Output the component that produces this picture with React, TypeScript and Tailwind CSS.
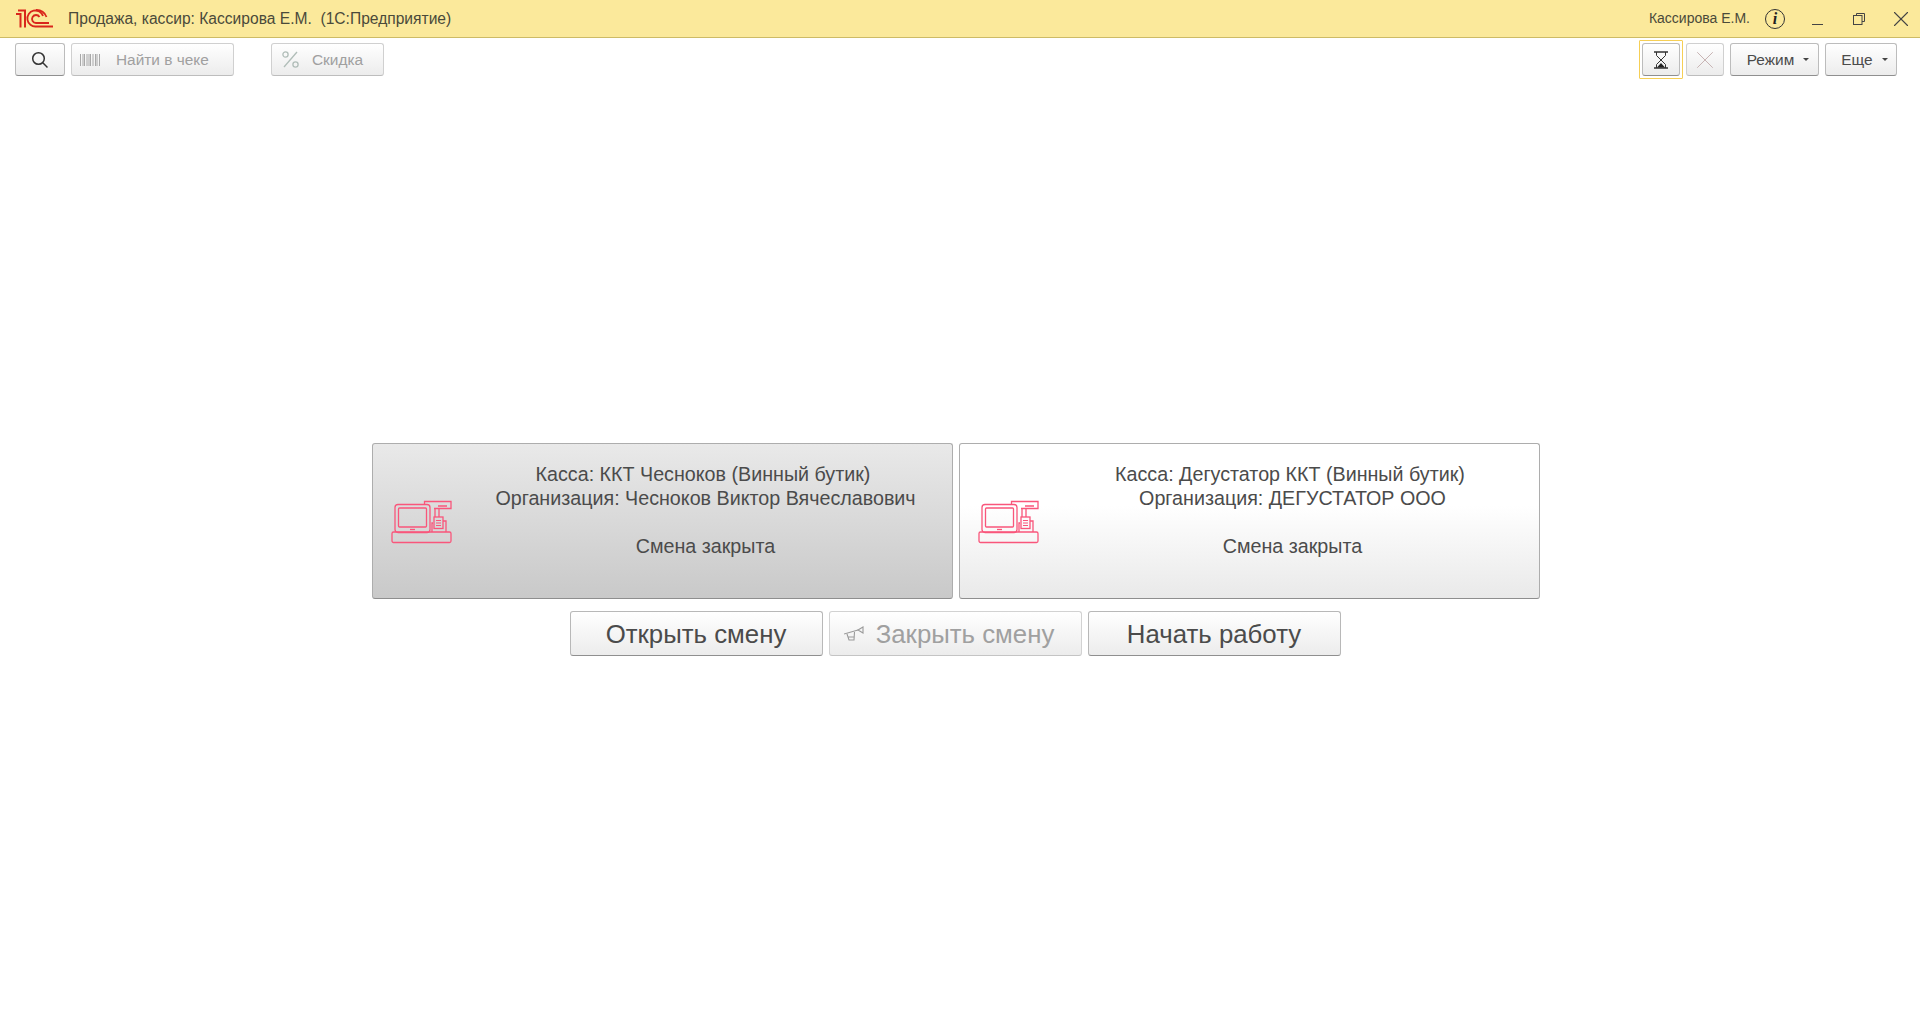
import { X } from "lucide-react";

const font = "font-['Liberation_Sans','Noto_Sans',sans-serif]";

function Logo() {
  return (
    <svg width="37" height="19" viewBox="0 0 37 19" fill="none" stroke="#d9261c" aria-hidden="true">
      <path d="M0 5 H4.5 V18.5" strokeWidth="2" />
      <path d="M2 1.5 H9 V18.5" strokeWidth="2" />
      <path d="M27 7 A8 8 0 1 0 20 17.5 H37" strokeWidth="1.8" />
      <path d="M23.5 8 A4 4 0 1 0 20 14 H33" strokeWidth="1.8" />
      <path d="M30.5 8 A11 11 0 0 0 20 1" strokeWidth="1.8" />
    </svg>
  );
}

function KktIcon() {
  return (
    <svg width="62" height="44" viewBox="0 0 62 44" fill="none" stroke="#f9567b" strokeWidth="1.3" aria-hidden="true">
      <rect x="1" y="32" width="59" height="10.5" rx="1.5" />
      <rect x="4" y="4.5" width="35" height="28" rx="3" />
      <rect x="7.5" y="8" width="28" height="19" rx="1" />
      <path d="M19 29.5 H24" />
      <path d="M33.5 4.5 V1.5 H60 V8.5 H43" />
      <path d="M47 6 H56 M44 8.5 V17 M48 8.5 V17" />
      <rect x="43" y="17" width="9" height="11.5" />
      <path d="M45 20.5 H50 M45 23 H50 M45 25.5 H50" strokeWidth="1" />
      <path d="M42 23 H41 V32 M52 21 H55 V32" />
    </svg>
  );
}

function ToolButton({
  children,
  className,
  disabled,
}: {
  children: React.ReactNode;
  className: string;
  disabled?: boolean;
}) {
  return (
    <button
      className={`flex h-[33px] items-center rounded-[3px] border bg-linear-to-b from-white to-[#ececec] text-[15.4px] ${
        disabled ? "border-[#d0d0d0] border-b-[#bdbdbd] text-[#a0a0a0]" : "border-[#bcbcbc] border-b-[#8f8f8f] text-[#4b4b4b]"
      } ${className}`}
    >
      {children}
    </button>
  );
}

function Caret() {
  return <span className="ml-[9px] h-0 w-0 border-x-[3px] border-t-[3px] border-x-transparent border-t-[#444]" />;
}

function KktCard({
  title,
  org,
  active,
}: {
  title: string;
  org: string;
  active?: boolean;
}) {
  return (
    <div
      className={`flex h-[156px] w-[581px] items-center rounded-[3px] border border-[#adadad] border-b-[#8e8e8e] bg-linear-to-b ${
        active ? "from-[#e9e9e9] to-[#c9c9c9]" : "from-white from-40% to-[#e9e9e9]"
      }`}
    >
      <div className="ml-[18px] mt-[1px] shrink-0">
        <KktIcon />
      </div>
      <div className="-mt-[1px] flex h-full flex-1 flex-col items-center pl-[6px] pt-[18px] text-[19.7px] leading-[24px] text-[#4b4b4b]">
        <div className="mr-[5px]">{title}</div>
        <div>{org}</div>
        <div className="mt-[24px]">Смена закрыта</div>
      </div>
    </div>
  );
}

function BigButton({
  children,
  disabled,
}: {
  children: React.ReactNode;
  disabled?: boolean;
}) {
  return (
    <button
      className={`flex h-[45px] w-[253px] items-center justify-center rounded-[3px] border bg-linear-to-b from-white to-[#ececec] pt-[1px] text-[25.8px] ${
        disabled ? "border-[#d2d2d2] border-b-[#c4c4c4] pr-[12px] text-[#a0a0a0]" : "border-[#b8b8b8] border-b-[#8f8f8f] text-[#4b4b4b]"
      }`}
    >
      {children}
    </button>
  );
}

export default function App() {
  return (
    <div className={`${font} flex h-[1030px] flex-col bg-white`}>
      <header className="flex h-[38px] shrink-0 items-center border-b border-[#cdbb66] bg-[#fbe99b] pl-[16px] pr-[6px]">
        <Logo />
        <span className="ml-[15px] whitespace-pre text-[15.6px] text-[#4a4a3a]">Продажа, кассир: Кассирова Е.М.  (1С:Предприятие)</span>
        <span className="ml-auto text-[14px] text-[#4a4a3a]">Кассирова Е.М.</span>
        <span className="ml-[15px] flex h-[20px] w-[20px] items-center justify-center rounded-full border-[1.5px] border-[#333] font-['Liberation_Serif',serif] text-[16px] font-bold italic text-[#222]">
          i
        </span>
        <span className="ml-[27px] mt-[12px] h-[1px] w-[11px] bg-[#444]" />
        <svg className="ml-[30px]" width="12" height="12" viewBox="0 0 12 12" fill="none" stroke="#444" aria-hidden="true">
          <path d="M3.5 2.5 V0.5 H11.5 V8.5 H9" />
          <rect x="0.5" y="2.5" width="8.5" height="9" />
        </svg>
        <X className="ml-[23px]" size={26} strokeWidth={1} color="#444" />
      </header>

      <div className="flex h-[42px] shrink-0 items-start pl-[15px] pr-[23px] pt-[5px]">
        <ToolButton className="w-[50px] justify-center">
          <svg width="18" height="18" viewBox="0 0 18 18" fill="none" stroke="#333" strokeWidth="1.5" aria-hidden="true">
            <circle cx="7.5" cy="7.5" r="5.8" />
            <path d="M11.8 11.8 L16.5 16.5" />
          </svg>
        </ToolButton>
        <ToolButton disabled className="ml-[6px] w-[163px] pl-[8px]">
          <svg width="20" height="12" viewBox="0 0 20 12" stroke="#a8a8a8" aria-hidden="true">
            <path d="M.5 0V12M3 0V12M4.5 0V12M7 0V12M9 0V12M10.5 0V12M13 0V12M15.5 0V12M17 0V12M19.5 0V12" />
          </svg>
          <span className="ml-[16px]">Найти в чеке</span>
        </ToolButton>
        <ToolButton disabled className="ml-[37px] w-[113px] pl-[10px]">
          <svg width="17" height="17" viewBox="0 0 17 17" fill="none" stroke="#b0bdb8" strokeWidth="1.3" aria-hidden="true">
            <circle cx="3.5" cy="3.5" r="2.6" />
            <circle cx="13.5" cy="13.5" r="2.6" />
            <path d="M15 1 L2 16" />
          </svg>
          <span className="ml-[13px]">Скидка</span>
        </ToolButton>

        <div className="relative ml-auto">
          <div className="absolute -inset-[3px] rounded-[1px] border border-[#f6cf55]" />
          <ToolButton className="w-[38px] justify-center">
            <svg width="14" height="18" viewBox="0 0 14 18" fill="none" stroke="#333" strokeWidth="1" aria-hidden="true">
              <path d="M0 1H14M0 17H14" strokeWidth="1.4" />
              <path d="M2.5 1V4.5L11.5 13.5V17M11.5 1V4.5L2.5 13.5V17" />
              <path d="M7 12 L11 16.5 H3 Z" fill="#222" stroke="none" />
            </svg>
          </ToolButton>
        </div>
        <ToolButton disabled className="ml-[6px] w-[38px] justify-center">
          <X size={30} strokeWidth={0.8} color="#c8b4b4" />
        </ToolButton>
        <ToolButton className="ml-[6px] w-[89px] justify-center pl-[7px]">
          Режим
          <Caret />
        </ToolButton>
        <ToolButton className="ml-[6px] w-[72px] justify-center pl-[7px]">
          Еще
          <Caret />
        </ToolButton>
      </div>

      <main className="flex flex-col items-center pr-[8px] pt-[363px]">
        <div className="flex gap-[6px]">
          <KktCard active title="Касса: ККТ Чесноков (Винный бутик)" org="Организация: Чесноков Виктор Вячеславович" />
          <KktCard title="Касса: Дегустатор ККТ (Винный бутик)" org="Организация: ДЕГУСТАТОР ООО" />
        </div>
        <div className="mt-[12px] mr-[2px] flex gap-[6px]">
          <BigButton>Открыть смену</BigButton>
          <BigButton disabled>
            <svg className="mr-[12px]" width="20" height="16" viewBox="0 0 20 16" fill="none" stroke="#9a9a9a" strokeWidth="1.1" aria-hidden="true">
              <path d="M0 8 L14 4 M3 8 L5 14 H10 L10.5 6 M4.5 11 H10" />
              <path d="M14 4 L19 1 V7 Z" />
            </svg>
            Закрыть смену
          </BigButton>
          <BigButton>Начать работу</BigButton>
        </div>
      </main>
    </div>
  );
}
